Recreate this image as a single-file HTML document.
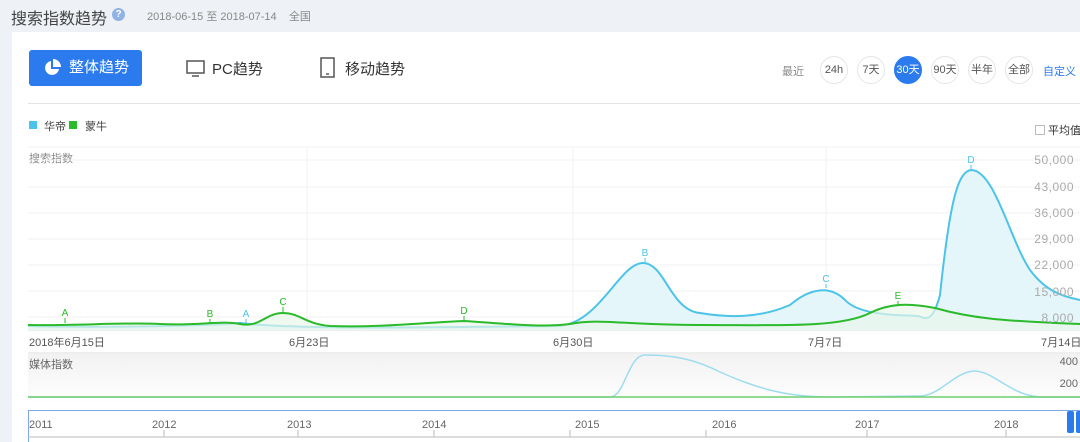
<!DOCTYPE html>
<html><head><meta charset="utf-8"><style>
*{margin:0;padding:0;box-sizing:border-box}
body{width:1080px;height:442px;overflow:hidden;background:#eef1f5;font-family:"Liberation Sans","Noto Sans CJK SC",sans-serif;position:relative}
.a{position:absolute;white-space:nowrap}
.panel{position:absolute;left:12px;top:32px;width:1068px;height:410px;background:#fff}
.btn{left:29px;top:50px;width:113px;height:36px;background:#2b7bef;border-radius:3px;color:#fff;font-size:15px;line-height:36px;padding-left:40px}
.pill{top:56px;width:28px;height:28px;border-radius:50%;border:1px solid #e5e5e5;font-size:11px;line-height:26px;text-align:center;color:#555}
.yl{right:6px;font-size:12px;color:#aaa;letter-spacing:.5px}
.dl{top:334px;font-size:11px;color:#555}
</style></head><body>
<div class="a" style="left:11px;top:5px;font-size:16px;color:#444">搜索指数趋势</div>
<div class="a" style="left:112px;top:8px;width:13px;height:13px;border-radius:50%;background:#8fb3e6;color:#fff;font-size:10px;line-height:13px;text-align:center;font-weight:bold">?</div>
<div class="a" style="left:147px;top:8px;font-size:11px;color:#888">2018-06-15 至 2018-07-14 &nbsp;&nbsp; 全国</div>
<div class="panel"></div>
<div class="a btn">整体趋势</div>
<svg class="a" style="left:42px;top:58px" width="20" height="20" viewBox="0 0 20 20"><path d="M9 3A7 7 0 1 0 17 11H9Z" fill="#fff"/><path d="M11 1V9H19A8 8 0 0 0 11 1Z" fill="#fff"/></svg>
<svg class="a" style="left:186px;top:59px" width="20" height="20"><rect x="1" y="2" width="17" height="12" fill="none" stroke="#555" stroke-width="1.5"/><line x1="6" y1="17" x2="13" y2="17" stroke="#555" stroke-width="1.5"/></svg>
<div class="a" style="left:212px;top:58px;font-size:15px;color:#333">PC趋势</div>
<svg class="a" style="left:319px;top:57px" width="18" height="22"><rect x="2" y="1" width="13" height="19" fill="none" stroke="#555" stroke-width="1.5"/><line x1="7" y1="17" x2="10" y2="17" stroke="#555" stroke-width="1.5"/></svg>
<div class="a" style="left:345px;top:58px;font-size:15px;color:#333">移动趋势</div>
<div class="a" style="left:782px;top:63px;font-size:11px;color:#888">最近</div>
<div class="a pill" style="left:820px">24h</div>
<div class="a pill" style="left:857px">7天</div>
<div class="a pill" style="left:894px;background:#2b7bef;border-color:#2b7bef;color:#fff">30天</div>
<div class="a pill" style="left:931px">90天</div>
<div class="a pill" style="left:968px">半年</div>
<div class="a pill" style="left:1005px">全部</div>
<div class="a" style="left:1043px;top:63px;font-size:11px;color:#2b7bef">自定义</div>
<div class="a" style="left:28px;top:103px;width:1052px;height:1px;background:#e3e3e3"></div>
<div class="a" style="left:29px;top:121px;width:8px;height:8px;background:#4cc3e8"></div>
<div class="a" style="left:44px;top:118px;font-size:11px;color:#444">华帝</div>
<div class="a" style="left:69px;top:121px;width:8px;height:8px;background:#2bba2b"></div>
<div class="a" style="left:85px;top:118px;font-size:11px;color:#444">蒙牛</div>
<div class="a" style="left:1035px;top:125px;width:10px;height:10px;border:1px solid #bbb"></div>
<div class="a" style="left:1048px;top:122px;font-size:11px;color:#333">平均值</div>
<div class="a" style="left:29px;top:150px;font-size:11px;color:#888">搜索指数</div>
<svg class="a" style="left:0;top:0" width="1080" height="442">
<g stroke="#f0f0f0" stroke-width="1">
<line x1="28" y1="147" x2="1080" y2="147"/>
<line x1="28" y1="160" x2="1080" y2="160"/><line x1="28" y1="187" x2="1080" y2="187"/><line x1="28" y1="213" x2="1080" y2="213"/><line x1="28" y1="239" x2="1080" y2="239"/><line x1="28" y1="265" x2="1080" y2="265"/><line x1="28" y1="291" x2="1080" y2="291"/><line x1="28" y1="317" x2="1080" y2="317"/>
<line x1="307" y1="147" x2="307" y2="330"/><line x1="573" y1="147" x2="573" y2="330"/><line x1="826" y1="147" x2="826" y2="330"/>
</g>
<line x1="28" y1="330" x2="1080" y2="330" stroke="#ddd"/>
<line x1="28" y1="353" x2="1080" y2="353" stroke="#ddd"/>
<defs><linearGradient id="g" x1="0" y1="0" x2="0" y2="1"><stop offset="0" stop-color="#f2f2f2"/><stop offset="1" stop-color="#fff"/></linearGradient></defs>
<rect x="28" y="354" width="1052" height="52" fill="url(#g)"/>
<path d="M28 326 C100 328 200 326 240 323 C300 330 450 327 560 326 C600 322 620 263 643 263 C665 263 670 310 700 313 C730 318 760 318 790 305 C810 288 830 285 845 300 C860 316 900 315 918 316 C925 318 932 325 940 295 C950 200 958 170 972 170 C995 172 1010 240 1030 270 C1045 290 1060 296 1080 300 L1080 330 L28 330Z" fill="#e5f6fb" stroke="none"/>
<path d="M28 326 C100 328 200 326 240 323 C300 330 450 327 560 326 C600 322 620 263 643 263 C665 263 670 310 700 313 C730 318 760 318 790 305 C810 288 830 285 845 300 C860 316 900 315 918 316 C925 318 932 325 940 295 C950 200 958 170 972 170 C995 172 1010 240 1030 270 C1045 290 1060 296 1080 300" fill="none" stroke="#4cc3e8" stroke-width="2"/>
<path d="M28 325 C80 326 120 322 160 324 C200 326 220 320 240 324 C260 328 265 313 283 313 C300 313 305 324 330 326 C380 328 430 322 464 321 C500 323 540 328 570 324 C600 318 620 325 700 325 C780 325 840 328 870 313 C890 303 910 303 935 308 C970 318 1000 321 1080 324 L1080 330 L28 330Z" fill="#e8f7e8" opacity=".7"/>
<path d="M28 325 C80 326 120 322 160 324 C200 326 220 320 240 324 C260 328 265 313 283 313 C300 313 305 324 330 326 C380 328 430 322 464 321 C500 323 540 328 570 324 C600 318 620 325 700 325 C780 325 840 328 870 313 C890 303 910 303 935 308 C970 318 1000 321 1080 324" fill="none" stroke="#2bba2b" stroke-width="2"/>
<g font-size="10" font-family="Liberation Sans" text-anchor="middle">
<g fill="#2bba2b" stroke="#2bba2b"><text x="65" y="316" stroke="none">A</text><line x1="65" y1="318" x2="65" y2="323"/><text x="210" y="317" stroke="none">B</text><line x1="210" y1="319" x2="210" y2="323"/><text x="283" y="305" stroke="none">C</text><line x1="283" y1="307" x2="283" y2="312"/><text x="464" y="314" stroke="none">D</text><line x1="464" y1="316" x2="464" y2="320"/><text x="898" y="299" stroke="none">E</text><line x1="898" y1="301" x2="898" y2="305"/></g>
<g fill="#4cc3e8" stroke="#4cc3e8"><text x="246" y="317" stroke="none">A</text><line x1="246" y1="319" x2="246" y2="323"/><text x="645" y="256" stroke="none">B</text><line x1="645" y1="258" x2="645" y2="262"/><text x="826" y="282" stroke="none">C</text><line x1="826" y1="284" x2="826" y2="288"/><text x="971" y="163" stroke="none">D</text><line x1="971" y1="165" x2="971" y2="169"/></g>
</g>
<path d="M28 397 L610 397 C625 397 628 355 645 355 C680 355 700 362 720 372 C760 390 790 397 830 397 L920 396 C940 396 955 371 975 371 C995 372 1010 395 1040 397 L1080 397" fill="none" stroke="#9edcf0" stroke-width="1.5"/>
<line x1="28" y1="397" x2="1080" y2="397" stroke="#6fcf6f" stroke-width="1.5"/>
<rect x="28.5" y="410.5" width="1060" height="40" fill="none" stroke="#7ea6e8"/>
<g stroke="#bbb"><line x1="28" y1="437" x2="1080" y2="437"/>
<line x1="164" y1="430" x2="164" y2="437"/><line x1="298" y1="430" x2="298" y2="437"/><line x1="434" y1="430" x2="434" y2="437"/><line x1="570" y1="430" x2="570" y2="437"/><line x1="706" y1="430" x2="706" y2="437"/><line x1="867" y1="430" x2="867" y2="437"/><line x1="1006" y1="430" x2="1006" y2="437"/></g>
<rect x="1067" y="411" width="7" height="22" rx="2" fill="#2b7bef"/><rect x="1076" y="411" width="6" height="22" rx="2" fill="#2b7bef"/>
</svg>
<div class="a yl" style="top:153px">50,000</div>
<div class="a yl" style="top:180px">43,000</div>
<div class="a yl" style="top:206px">36,000</div>
<div class="a yl" style="top:232px">29,000</div>
<div class="a yl" style="top:258px">22,000</div>
<div class="a yl" style="top:285px">15,000</div>
<div class="a yl" style="top:311px">8,000</div>
<div class="a dl" style="left:29px">2018年6月15日</div>
<div class="a dl" style="left:289px">6月23日</div>
<div class="a dl" style="left:553px">6月30日</div>
<div class="a dl" style="left:808px">7月7日</div>
<div class="a dl" style="left:1041px">7月14日</div>
<div class="a" style="left:29px;top:356px;font-size:11px;color:#666">媒体指数</div>
<div class="a" style="right:2px;top:356px;font-size:11px;color:#666">400</div>
<div class="a" style="right:2px;top:378px;font-size:11px;color:#666">200</div>
<div class="a" style="left:29px;top:419px;font-size:11px;color:#666">2011</div>
<div class="a" style="left:152px;top:419px;font-size:11px;color:#666">2012</div>
<div class="a" style="left:287px;top:419px;font-size:11px;color:#666">2013</div>
<div class="a" style="left:422px;top:419px;font-size:11px;color:#666">2014</div>
<div class="a" style="left:575px;top:419px;font-size:11px;color:#666">2015</div>
<div class="a" style="left:712px;top:419px;font-size:11px;color:#666">2016</div>
<div class="a" style="left:855px;top:419px;font-size:11px;color:#666">2017</div>
<div class="a" style="left:994px;top:419px;font-size:11px;color:#666">2018</div>
</body></html>
